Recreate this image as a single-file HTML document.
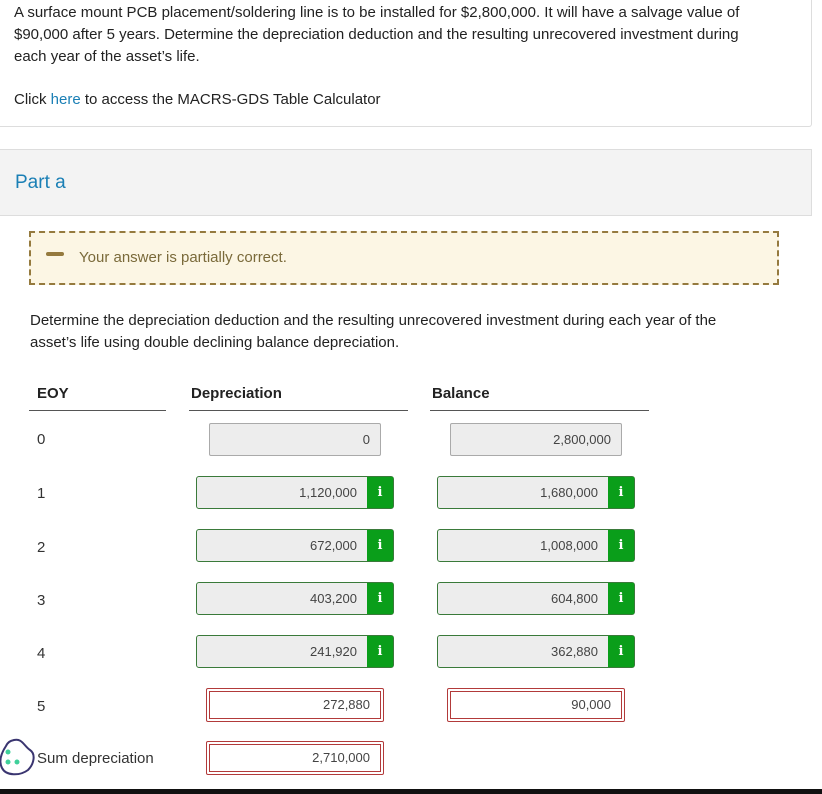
<!DOCTYPE html>
<html><head><style>
body{margin:0;width:822px;height:794px;overflow:hidden;background:#fff;font-family:"Liberation Sans",sans-serif;color:#333;position:relative}
.a{position:absolute}
.t{font-size:15px;line-height:22px;color:#222}
.in{position:absolute;box-sizing:border-box;background:#ededed;border:1px solid #aaa;font-size:13px;text-align:right;color:#444;line-height:31px;padding-right:10px;border-radius:2px}
.g{position:absolute;box-sizing:border-box;border:1px solid #3a7a3a;background:#ededed;border-radius:3px;height:33px;font-size:13px;color:#444;line-height:31px}
.g span{position:absolute;right:36px}
.g b{position:absolute;right:0;top:0;bottom:0;width:26px;background:#0a9e1a;color:#fff;text-align:center;font-family:"DejaVu Serif",serif;font-size:13px}
.r{position:absolute;box-sizing:border-box;border:1px solid #b23a3a;padding:2px;height:34px;border-radius:2px}
.r div{border:1px solid #b23a3a;height:100%;box-sizing:border-box;text-align:right;font-size:13px;line-height:26px;padding-right:10px;color:#444}
.h{font-size:15px;font-weight:bold;color:#222}
.l{position:absolute;height:1px;background:#555;top:410px}
.n{position:absolute;left:37px;font-size:15px;color:#333}
</style></head><body>
<div class="a" style="left:0;top:0;width:811px;height:126px;border:1px solid #ddd;border-top:none;border-left:none;border-radius:0 0 3px 0"></div>
<div class="a t" style="left:14px;top:2px;width:745px">A surface mount PCB placement/soldering line is to be installed for $2,800,000. It will have a salvage value of $90,000 after 5 years. Determine the depreciation deduction and the resulting unrecovered investment during each year of the asset’s life.</div>
<div class="a t" style="left:14px;top:89px">Click <span style="color:#1a7fb5">here</span> to access the MACRS-GDS Table Calculator</div>
<div class="a" style="left:0;top:149px;width:811px;height:65px;background:#f3f3f3;border-top:1px solid #ddd;border-bottom:1px solid #ddd;border-right:1px solid #ddd"></div>
<div class="a" style="left:15px;top:172px;font-size:19px;color:#1a7fb5">Part a</div>
<div class="a" style="left:29px;top:231px;width:750px;height:54px;box-sizing:border-box;border:2px dashed #957a3e;background:#fcf6e4"></div>
<div class="a" style="left:46px;top:252px;width:18px;height:4px;background:#957a3e;border-radius:2px"></div>
<div class="a" style="left:79px;top:249px;font-size:15px;color:#7a6a3a">Your answer is partially correct.</div>
<div class="a t" style="left:30px;top:310px;width:720px">Determine the depreciation deduction and the resulting unrecovered investment during each year of the asset’s life using double declining balance depreciation.</div>
<div class="a h" style="left:37px;top:385px">EOY</div>
<div class="a h" style="left:191px;top:385px">Depreciation</div>
<div class="a h" style="left:432px;top:385px">Balance</div>
<div class="l" style="left:29px;width:137px"></div>
<div class="l" style="left:189px;width:219px"></div>
<div class="l" style="left:430px;width:219px"></div>
<div class="n" style="top:431px">0</div>
<div class="in" style="left:209px;top:423px;width:172px;height:33px">0</div>
<div class="in" style="left:450px;top:423px;width:172px;height:33px">2,800,000</div>
<div class="n" style="top:485px">1</div>
<div class="g" style="left:196px;top:476px;width:198px"><span>1,120,000</span><b>i</b></div>
<div class="g" style="left:437px;top:476px;width:198px"><span>1,680,000</span><b>i</b></div>
<div class="n" style="top:539px">2</div>
<div class="g" style="left:196px;top:529px;width:198px"><span>672,000</span><b>i</b></div>
<div class="g" style="left:437px;top:529px;width:198px"><span>1,008,000</span><b>i</b></div>
<div class="n" style="top:592px">3</div>
<div class="g" style="left:196px;top:582px;width:198px"><span>403,200</span><b>i</b></div>
<div class="g" style="left:437px;top:582px;width:198px"><span>604,800</span><b>i</b></div>
<div class="n" style="top:645px">4</div>
<div class="g" style="left:196px;top:635px;width:198px"><span>241,920</span><b>i</b></div>
<div class="g" style="left:437px;top:635px;width:198px"><span>362,880</span><b>i</b></div>
<div class="n" style="top:698px">5</div>
<div class="r" style="left:206px;top:688px;width:178px"><div>272,880</div></div>
<div class="r" style="left:447px;top:688px;width:178px"><div>90,000</div></div>
<svg class="a" style="left:0;top:738px" width="36" height="38" viewBox="0 0 36 38"><path d="M14 2 C22 0 24 8 30 12 C36 16 34 26 28 32 C20 38 6 38 2 30 C-2 22 2 14 6 8 C8 4 10 3 14 2Z" fill="#fff" stroke="#3a3570" stroke-width="2"/><circle cx="8" cy="14" r="2.5" fill="#3fd09a"/><circle cx="8" cy="24" r="2.5" fill="#3fd09a"/><circle cx="17" cy="24" r="2.5" fill="#3fd09a"/></svg>
<div class="a" style="left:37px;top:750px;font-size:15px;color:#333">Sum depreciation</div>
<div class="r" style="left:206px;top:741px;width:178px"><div>2,710,000</div></div>
<div class="a" style="left:0;top:789px;width:822px;height:5px;background:#111"></div>
</body></html>
